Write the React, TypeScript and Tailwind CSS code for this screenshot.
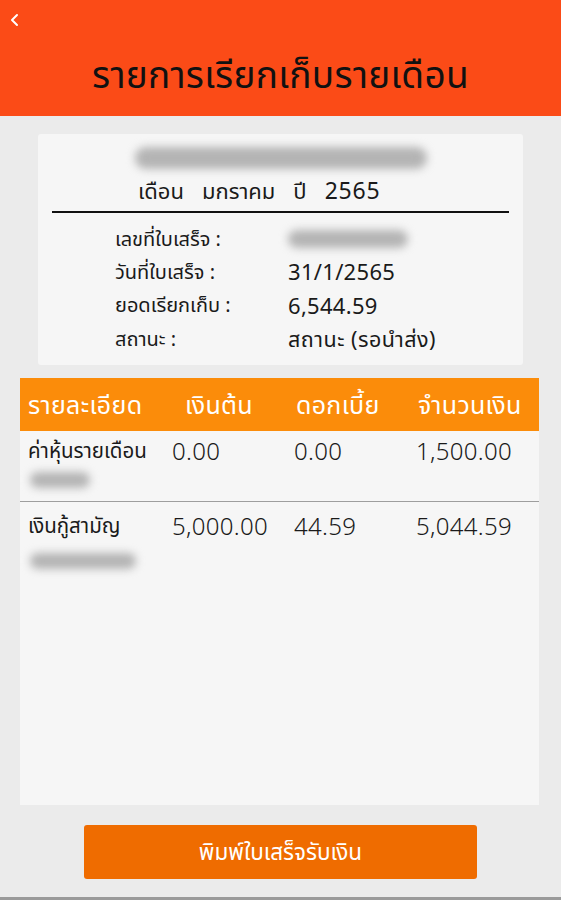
import React from "react";

const font = { fontFamily: '"Noto Sans", "Noto Sans Thai", "Open Sans", sans-serif' };

function Blur({ w, h = 18, className = "" }: { w: number; h?: number; className?: string }) {
  return (
    <div
      className={"rounded-full bg-[#b4b4b4] blur-[4px] " + className}
      style={{ width: w, height: h }}
    />
  );
}

export default function App() {
  const rows = [
    { name: "ค่าหุ้นรายเดือน", p: "0.00", i: "0.00", t: "1,500.00", bw: 60, first: true },
    { name: "เงินกู้สามัญ", p: "5,000.00", i: "44.59", t: "5,044.59", bw: 106, first: false },
  ];
  return (
    <div className="w-[561px] h-[900px] bg-[#ebebeb] flex flex-col overflow-hidden" style={font}>
      <div className="h-[116px] bg-[#fb4b17] relative flex items-end justify-center pb-[24px] shrink-0">
        <svg className="absolute left-[9px] top-[13px]" width="12" height="14" viewBox="0 0 12 14">
          <path d="M8 2 L3 7 L8 12" fill="none" stroke="#fff" strokeWidth="2" strokeLinecap="round" strokeLinejoin="round" />
        </svg>
        <div className="text-[37px] leading-none text-[#111] tracking-[0.3px]">รายการเรียกเก็บรายเดือน</div>
      </div>

      <div className="mx-[38px] mt-[18px] h-[231px] bg-[#f6f6f6] rounded-[3px] flex flex-col px-[14px]">
        <div className="flex justify-center pt-[13px]">
          <Blur w={292} h={22} />
        </div>
        <div className="pl-[86px] mt-[6px] flex items-center gap-[18px] text-[22px] leading-[30px] text-[#1a1a1a]">
          <span>เดือน</span>
          <span>มกราคม</span>
          <span className="flex gap-[18px]">
            <span>ปี</span>
            <span className="text-[23px] tracking-[0.8px]">2565</span>
          </span>
        </div>
        <div className="mt-[6px] h-[2px] bg-[#111]" />
        <div className="pl-[63px] mt-[9px] flex flex-col text-[20px] text-[#1a1a1a]">
          <div className="flex h-[33px] items-center">
            <div className="w-[173px]">เลขที่ใบเสร็จ :</div>
            <Blur w={120} h={18} />
          </div>
          <div className="flex h-[33px] items-center">
            <div className="w-[173px]">วันที่ใบเสร็จ :</div>
            <div className="text-[22px] tracking-[0.3px]">31/1/2565</div>
          </div>
          <div className="flex h-[34px] items-center">
            <div className="w-[173px]">ยอดเรียกเก็บ :</div>
            <div className="text-[22px] tracking-[0.3px]">6,544.59</div>
          </div>
          <div className="flex h-[34px] items-center">
            <div className="w-[173px]">สถานะ :</div>
            <div className="text-[21.5px] tracking-[0.5px]">สถานะ (รอนำส่ง)</div>
          </div>
        </div>
      </div>

      <div className="mx-[20px] mt-[13px] w-[519px] h-[427px] bg-[#f6f6f6] flex flex-col">
        <div className="h-[53px] bg-[#fb8c0a] flex items-center text-white text-[25px] tracking-[0.3px]">
          <div className="w-[152px] pl-[8px]">รายละเอียด</div>
          <div className="w-[118px] pl-[13px]">เงินต้น</div>
          <div className="w-[122px] pl-[6px]">ดอกเบี้ย</div>
          <div className="flex-1 pl-[6px]">จำนวนเงิน</div>
        </div>
        {rows.map((r, idx) => (
          <div
            key={idx}
            className={
              "flex flex-col " +
              (r.first ? "h-[71px] border-b border-[#9e9e9e]" : "h-[80px] pt-[4px]")
            }
          >
            <div className="flex items-center h-[38px] pt-[1px] text-[24px] font-light tracking-[0.3px] text-[#1a1a1a]">
              <div className="w-[152px] pl-[8px] text-[20.5px] font-normal tracking-normal">{r.name}</div>
              <div className="w-[122px]">{r.p}</div>
              <div className="w-[122px]">{r.i}</div>
              <div className="flex-1">{r.t}</div>
            </div>
            <div className={"pl-[10px] " + (r.first ? "mt-[3px]" : "mt-[9px]")}>
              <Blur w={r.bw} h={16} />
            </div>
          </div>
        ))}
      </div>

      <div className="flex justify-center mt-[20px]">
        <div className="w-[393px] h-[54px] bg-[#ef6c00] rounded-[3px] flex items-center justify-center text-white text-[22.5px]">
          พิมพ์ใบเสร็จรับเงิน
        </div>
      </div>
      <div className="flex-1" />
      <div className="h-[3px] bg-[#9a9a9a]" />
    </div>
  );
}
